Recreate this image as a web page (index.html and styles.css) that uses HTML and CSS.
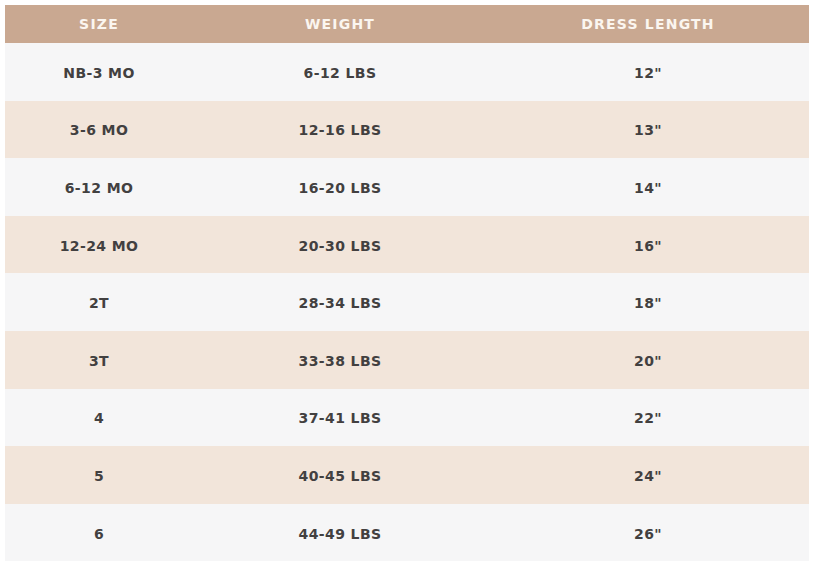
FILE: index.html
```html
<!DOCTYPE html>
<html lang="en">
<head>
<meta charset="utf-8">
<title>Size Chart</title>
<link rel="stylesheet" href="styles.css">
</head>
<body>
<div class="chart">
  <div class="row head"><div class="c1">SIZE</div><div class="c2">WEIGHT</div><div class="c3">DRESS LENGTH</div></div>
  <div class="row light"><div class="c1">NB-3 MO</div><div class="c2">6-12 LBS</div><div class="c3">12"</div></div>
  <div class="row beige"><div class="c1">3-6 MO</div><div class="c2">12-16 LBS</div><div class="c3">13"</div></div>
  <div class="row light"><div class="c1">6-12 MO</div><div class="c2">16-20 LBS</div><div class="c3">14"</div></div>
  <div class="row beige"><div class="c1">12-24 MO</div><div class="c2">20-30 LBS</div><div class="c3">16"</div></div>
  <div class="row light"><div class="c1">2T</div><div class="c2">28-34 LBS</div><div class="c3">18"</div></div>
  <div class="row beige"><div class="c1">3T</div><div class="c2">33-38 LBS</div><div class="c3">20"</div></div>
  <div class="row light"><div class="c1">4</div><div class="c2">37-41 LBS</div><div class="c3">22"</div></div>
  <div class="row beige"><div class="c1">5</div><div class="c2">40-45 LBS</div><div class="c3">24"</div></div>
  <div class="row light"><div class="c1">6</div><div class="c2">44-49 LBS</div><div class="c3">26"</div></div>
</div>
</body>
</html>
```
FILE: styles.css
```css
html, body {
  margin: 0;
  padding: 0;
  background: #ffffff;
}
body {
  padding: 5px 0 0 5px;
  font-family: "DejaVu Sans", "Liberation Sans", sans-serif;
  font-weight: bold;
}
.chart {
  width: 804px;
  display: flex;
  flex-direction: column;
}
.row {
  display: grid;
  grid-template-columns: 188px 294px 322px;
  height: 57.6px;
  box-sizing: border-box;
  padding-top: 2px;
  align-items: center;
  text-align: center;
  font-size: 14px;
  letter-spacing: 0.4px;
  color: #424040;
}
.row.head {
  height: 38px;
  padding-top: 0;
  background: #c9a891;
  color: #fbf6f0;
  letter-spacing: 1.2px;
}
.row.light {
  background: #f6f6f7;
}
.row.beige {
  background: #f2e5da;
}
```
